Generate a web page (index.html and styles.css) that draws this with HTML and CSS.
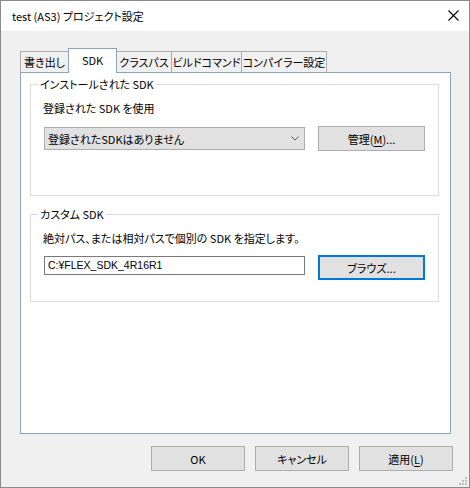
FILE: index.html
```html
<!DOCTYPE html>
<html lang="ja">
<head>
  <meta charset="UTF-8">
  <meta name="viewport" content="width=device-width, initial-scale=1.0">
  <title>test (AS3) プロジェクト設定</title>
  <link rel="stylesheet" href="styles.css">
</head>
<body>
  <div class="window">
    <!-- タイトルバー -->
    <div class="titlebar">
      <span class="title">test (AS3) プロジェクト設定</span>
      <span class="close">
        <svg width="11" height="11" viewBox="0 0 11 11"><path d="M0.5 0.5 L10.5 10.5 M10.5 0.5 L0.5 10.5" stroke="#000" stroke-width="1.1" fill="none"/></svg>
      </span>
    </div>

    <div class="client">
      <!-- タブ -->
      <div class="tabs">
        <div class="tab t-export">書き出し</div>
        <div class="tab t-sdk active">SDK</div>
        <div class="tab t-class">クラスパス</div>
        <div class="tab t-build">ビルドコマンド</div>
        <div class="tab t-comp">コンパイラー設定</div>
      </div>

      <div class="panel">
        <div class="group group-installed">
          <span class="legend">インストールされた SDK</span>
          <div class="label">登録された SDK を使用</div>
          <div class="row">
            <div class="combo">
              <span>登録されたSDKはありません</span>
              <svg width="8" height="5" viewBox="0 0 8 5"><path d="M0.5 0.5 L4 4 L7.5 0.5" stroke="#555" stroke-width="1" fill="none"/></svg>
            </div>
            <button class="btn">管理(<u>M</u>)...</button>
          </div>
        </div>

        <div class="group group-custom">
          <span class="legend">カスタム SDK</span>
          <div class="label">絶対パス、または相対パスで個別の SDK を指定します。</div>
          <div class="row">
            <div class="path">C:¥FLEX_SDK_4R16R1</div>
            <button class="btn default">ブラウズ...</button>
          </div>
        </div>
      </div>

      <!-- 下のボタン -->
      <div class="footer">
        <button class="btn">OK</button>
        <button class="btn">キャンセル</button>
        <button class="btn">適用(<u>L</u>)</button>
      </div>
    </div>

    <svg class="grip" width="8" height="8" viewBox="0 0 8 8" fill="#bdbdbd">
      <rect x="6" y="0" width="2" height="2"/>
      <rect x="3" y="3" width="2" height="2"/>
      <rect x="6" y="3" width="2" height="2"/>
      <rect x="0" y="6" width="2" height="2"/>
      <rect x="3" y="6" width="2" height="2"/>
      <rect x="6" y="6" width="2" height="2"/>
    </svg>
  </div>
</body>
</html>
```

FILE: styles.css
```css
body {
  margin: 0;
  padding: 0;
  font-family: "Noto Sans CJK JP", "Noto Sans", sans-serif;
  font-size: 11px;
  line-height: 16px;
  font-feature-settings: "palt" 1;
  color: #000;
}

/* === ウィンドウ === */
.window {
  position: relative;
  width: 470px;
  height: 488px;
  box-sizing: border-box;
  border: 1px solid #8a8a8a;
  background: #f0f0f0;
  display: flex;
  flex-direction: column;
}

.titlebar {
  height: 30px;
  background: #fff;
  display: flex;
  align-items: center;
  justify-content: space-between;
  padding: 0 10px 0 11px;
}

.close {
  display: flex;
  margin-top: -1px;
}

.client {
  flex: 1;
  display: flex;
  flex-direction: column;
  padding: 17px 18px 0 19px;
}

/* === タブ === */
.tabs {
  display: flex;
  align-items: flex-end;
  height: 24px;
}

.tab {
  box-sizing: border-box;
  height: 21px;
  border: 1px solid #adadad;
  border-bottom: none;
  margin-left: -1px;
  background: #f0f0f0;
  text-align: center;
  line-height: 20px;
  white-space: nowrap;
  overflow: hidden;
}

.tab:first-child {
  margin-left: 0;
}

.tab.active {
  position: relative;
  z-index: 1;
  height: 25px;
  margin-bottom: -1px;
  background: #fff;
  border-color: #8ca5bf;
  line-height: 22px;
}

.t-export { width: 49px; }
.t-sdk { width: 49px; }
.t-class { width: 56px; }
.t-build { width: 71px; }
.t-comp { width: 86px; }

.panel {
  height: 362px;
  box-sizing: border-box;
  border: 1px solid #8ca5bf;
  background: #fff;
  padding: 0 11px 0 9px;
}

/* === グループ === */
.group {
  position: relative;
  border: 1px solid #dcdcdc;
  padding: 15px 12px 44px 12px;
}

.group-installed {
  margin-top: 11px;
}

.group-custom {
  margin-top: 18px;
  padding-bottom: 21px;
}

.legend {
  position: absolute;
  top: -9px;
  left: 7px;
  padding: 0 2px;
  background: #fff;
}

.row {
  display: flex;
  align-items: flex-start;
  margin-top: 10px;
  padding-left: 1px;
}

.group-custom .row {
  margin-top: 9px;
}

.combo {
  box-sizing: border-box;
  width: 261px;
  height: 23px;
  margin-top: 1px;
  margin-right: 13px;
  border: 1px solid #adadad;
  background: #e1e1e1;
  display: flex;
  align-items: center;
  justify-content: space-between;
  padding: 0 5px 0 3px;
}

/* テキストボックス (表示のみ) */
.path {
  box-sizing: border-box;
  width: 261px;
  height: 19px;
  margin: 1px 13px 0 0;
  border: 1px solid #7a7a7a;
  background: #fff;
  padding: 0 3px;
  font-family: "Liberation Sans", "Noto Sans CJK JP", sans-serif;
  font-size: 10.5px;
  line-height: 17px;
  white-space: nowrap;
}

/* === ボタン === */
.btn {
  box-sizing: border-box;
  width: 107px;
  height: 25px;
  border: 1px solid #adadad;
  background: #e1e1e1;
  font: inherit;
  font-feature-settings: "palt" 1;
  color: #000;
  padding: 0;
}

.btn.default {
  border: 2px solid #0078d7;
}

.btn u {
  text-underline-offset: 2px;
}

.footer {
  display: flex;
  justify-content: flex-end;
  gap: 10px;
  margin-top: 12px;
}

.footer .btn {
  width: 94px;
}

.footer .btn:last-child {
  margin-right: -2px;
}

.grip {
  position: absolute;
  right: 2px;
  bottom: 2px;
}
```
